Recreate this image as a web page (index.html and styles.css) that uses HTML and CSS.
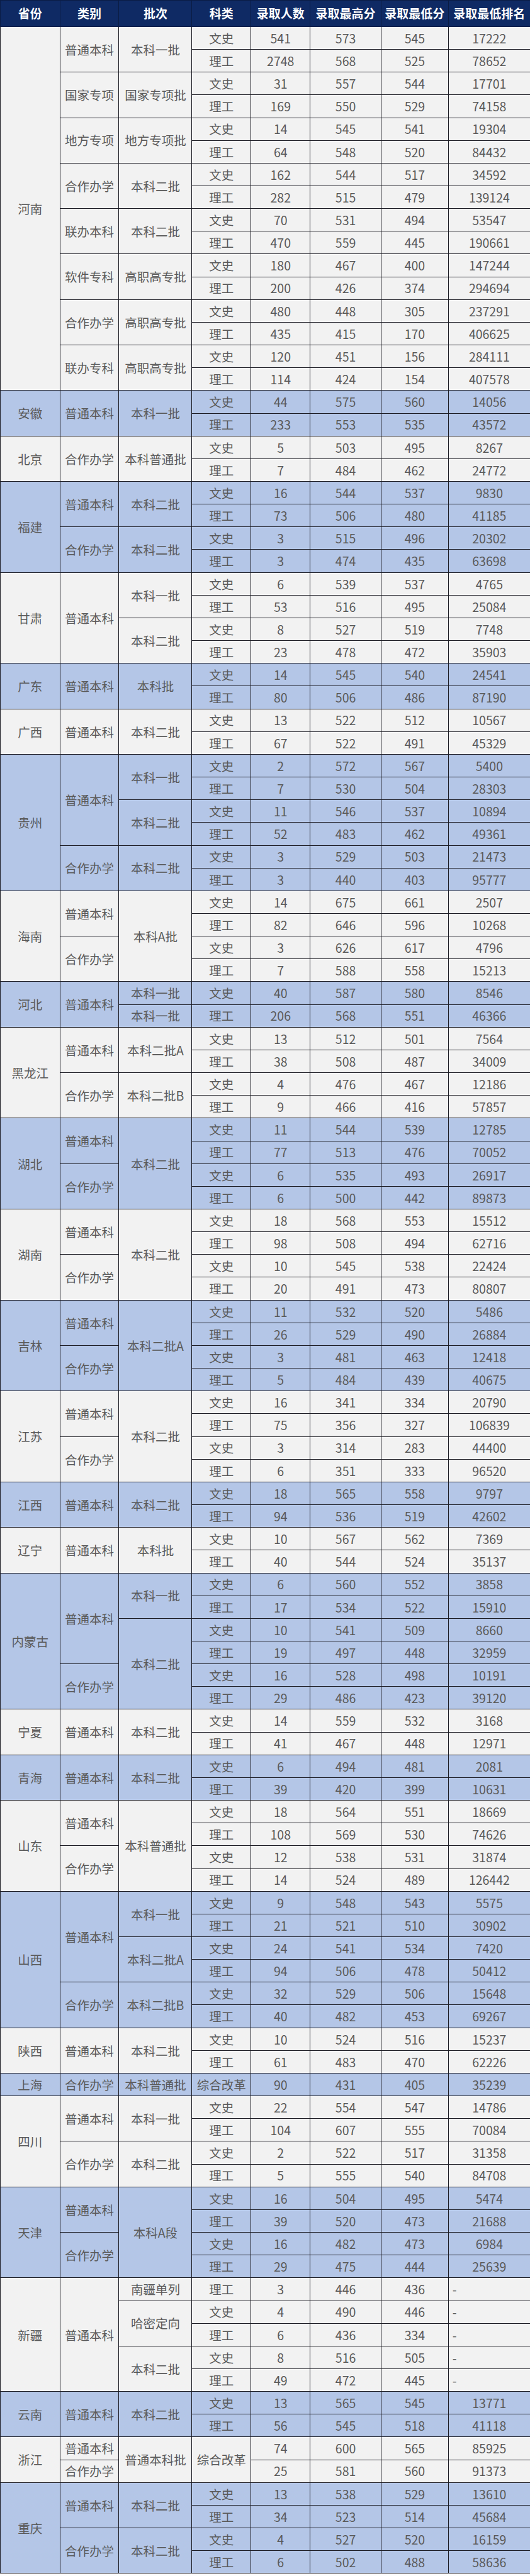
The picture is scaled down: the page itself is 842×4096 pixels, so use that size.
FILE: index.html
```html
<!DOCTYPE html>
<html lang="zh">
<head>
<meta charset="utf-8">
<title>录取分数</title>
<link rel="stylesheet" href="styles.css">
</head>
<body>
<table class="score-table">
<colgroup>
<col class="c-prov"><col class="c-type"><col class="c-batch"><col class="c-subj"><col class="c-num"><col class="c-max"><col class="c-min"><col class="c-rank">
</colgroup>
<thead>
<tr><th>省份</th><th>类别</th><th>批次</th><th>科类</th><th>录取人数</th><th>录取最高分</th><th>录取最低分</th><th>录取最低排名</th></tr>
</thead>
<tbody class="light">
<tr><td rowspan="16">河南</td><td rowspan="2">普通本科</td><td rowspan="2">本科一批</td><td>文史</td><td>541</td><td>573</td><td>545</td><td>17222</td></tr>
<tr><td>理工</td><td>2748</td><td>568</td><td>525</td><td>78652</td></tr>
<tr><td rowspan="2">国家专项</td><td rowspan="2">国家专项批</td><td>文史</td><td>31</td><td>557</td><td>544</td><td>17701</td></tr>
<tr><td>理工</td><td>169</td><td>550</td><td>529</td><td>74158</td></tr>
<tr><td rowspan="2">地方专项</td><td rowspan="2">地方专项批</td><td>文史</td><td>14</td><td>545</td><td>541</td><td>19304</td></tr>
<tr><td>理工</td><td>64</td><td>548</td><td>520</td><td>84432</td></tr>
<tr><td rowspan="2">合作办学</td><td rowspan="2">本科二批</td><td>文史</td><td>162</td><td>544</td><td>517</td><td>34592</td></tr>
<tr><td>理工</td><td>282</td><td>515</td><td>479</td><td>139124</td></tr>
<tr><td rowspan="2">联办本科</td><td rowspan="2">本科二批</td><td>文史</td><td>70</td><td>531</td><td>494</td><td>53547</td></tr>
<tr><td>理工</td><td>470</td><td>559</td><td>445</td><td>190661</td></tr>
<tr><td rowspan="2">软件专科</td><td rowspan="2">高职高专批</td><td>文史</td><td>180</td><td>467</td><td>400</td><td>147244</td></tr>
<tr><td>理工</td><td>200</td><td>426</td><td>374</td><td>294694</td></tr>
<tr><td rowspan="2">合作办学</td><td rowspan="2">高职高专批</td><td>文史</td><td>480</td><td>448</td><td>305</td><td>237291</td></tr>
<tr><td>理工</td><td>435</td><td>415</td><td>170</td><td>406625</td></tr>
<tr><td rowspan="2">联办专科</td><td rowspan="2">高职高专批</td><td>文史</td><td>120</td><td>451</td><td>156</td><td>284111</td></tr>
<tr><td>理工</td><td>114</td><td>424</td><td>154</td><td>407578</td></tr>
</tbody>
<tbody class="blue">
<tr><td rowspan="2">安徽</td><td rowspan="2">普通本科</td><td rowspan="2">本科一批</td><td>文史</td><td>44</td><td>575</td><td>560</td><td>14056</td></tr>
<tr><td>理工</td><td>233</td><td>553</td><td>535</td><td>43572</td></tr>
</tbody>
<tbody class="light">
<tr><td rowspan="2">北京</td><td rowspan="2">合作办学</td><td rowspan="2">本科普通批</td><td>文史</td><td>5</td><td>503</td><td>495</td><td>8267</td></tr>
<tr><td>理工</td><td>7</td><td>484</td><td>462</td><td>24772</td></tr>
</tbody>
<tbody class="blue">
<tr><td rowspan="4">福建</td><td rowspan="2">普通本科</td><td rowspan="2">本科二批</td><td>文史</td><td>16</td><td>544</td><td>537</td><td>9830</td></tr>
<tr><td>理工</td><td>73</td><td>506</td><td>480</td><td>41185</td></tr>
<tr><td rowspan="2">合作办学</td><td rowspan="2">本科二批</td><td>文史</td><td>3</td><td>515</td><td>496</td><td>20302</td></tr>
<tr><td>理工</td><td>3</td><td>474</td><td>435</td><td>63698</td></tr>
</tbody>
<tbody class="light">
<tr><td rowspan="4">甘肃</td><td rowspan="4">普通本科</td><td rowspan="2">本科一批</td><td>文史</td><td>6</td><td>539</td><td>537</td><td>4765</td></tr>
<tr><td>理工</td><td>53</td><td>516</td><td>495</td><td>25084</td></tr>
<tr><td rowspan="2">本科二批</td><td>文史</td><td>8</td><td>527</td><td>519</td><td>7748</td></tr>
<tr><td>理工</td><td>23</td><td>478</td><td>472</td><td>35903</td></tr>
</tbody>
<tbody class="blue">
<tr><td rowspan="2">广东</td><td rowspan="2">普通本科</td><td rowspan="2">本科批</td><td>文史</td><td>14</td><td>545</td><td>540</td><td>24541</td></tr>
<tr><td>理工</td><td>80</td><td>506</td><td>486</td><td>87190</td></tr>
</tbody>
<tbody class="light">
<tr><td rowspan="2">广西</td><td rowspan="2">普通本科</td><td rowspan="2">本科二批</td><td>文史</td><td>13</td><td>522</td><td>512</td><td>10567</td></tr>
<tr><td>理工</td><td>67</td><td>522</td><td>491</td><td>45329</td></tr>
</tbody>
<tbody class="blue">
<tr><td rowspan="6">贵州</td><td rowspan="4">普通本科</td><td rowspan="2">本科一批</td><td>文史</td><td>2</td><td>572</td><td>567</td><td>5400</td></tr>
<tr><td>理工</td><td>7</td><td>530</td><td>504</td><td>28303</td></tr>
<tr><td rowspan="2">本科二批</td><td>文史</td><td>11</td><td>546</td><td>537</td><td>10894</td></tr>
<tr><td>理工</td><td>52</td><td>483</td><td>462</td><td>49361</td></tr>
<tr><td rowspan="2">合作办学</td><td rowspan="2">本科二批</td><td>文史</td><td>3</td><td>529</td><td>503</td><td>21473</td></tr>
<tr><td>理工</td><td>3</td><td>440</td><td>403</td><td>95777</td></tr>
</tbody>
<tbody class="light">
<tr><td rowspan="4">海南</td><td rowspan="2">普通本科</td><td rowspan="4">本科A批</td><td>文史</td><td>14</td><td>675</td><td>661</td><td>2507</td></tr>
<tr><td>理工</td><td>82</td><td>646</td><td>596</td><td>10268</td></tr>
<tr><td rowspan="2">合作办学</td><td>文史</td><td>3</td><td>626</td><td>617</td><td>4796</td></tr>
<tr><td>理工</td><td>7</td><td>588</td><td>558</td><td>15213</td></tr>
</tbody>
<tbody class="blue">
<tr><td rowspan="2">河北</td><td rowspan="2">普通本科</td><td>本科一批</td><td>文史</td><td>40</td><td>587</td><td>580</td><td>8546</td></tr>
<tr><td>本科一批</td><td>理工</td><td>206</td><td>568</td><td>551</td><td>46366</td></tr>
</tbody>
<tbody class="light">
<tr><td rowspan="4">黑龙江</td><td rowspan="2">普通本科</td><td rowspan="2">本科二批A</td><td>文史</td><td>13</td><td>512</td><td>501</td><td>7564</td></tr>
<tr><td>理工</td><td>38</td><td>508</td><td>487</td><td>34009</td></tr>
<tr><td rowspan="2">合作办学</td><td rowspan="2">本科二批B</td><td>文史</td><td>4</td><td>476</td><td>467</td><td>12186</td></tr>
<tr><td>理工</td><td>9</td><td>466</td><td>416</td><td>57857</td></tr>
</tbody>
<tbody class="blue">
<tr><td rowspan="4">湖北</td><td rowspan="2">普通本科</td><td rowspan="4">本科二批</td><td>文史</td><td>11</td><td>544</td><td>539</td><td>12785</td></tr>
<tr><td>理工</td><td>77</td><td>513</td><td>476</td><td>70052</td></tr>
<tr><td rowspan="2">合作办学</td><td>文史</td><td>6</td><td>535</td><td>493</td><td>26917</td></tr>
<tr><td>理工</td><td>6</td><td>500</td><td>442</td><td>89873</td></tr>
</tbody>
<tbody class="light">
<tr><td rowspan="4">湖南</td><td rowspan="2">普通本科</td><td rowspan="4">本科二批</td><td>文史</td><td>18</td><td>568</td><td>553</td><td>15512</td></tr>
<tr><td>理工</td><td>98</td><td>508</td><td>494</td><td>62716</td></tr>
<tr><td rowspan="2">合作办学</td><td>文史</td><td>10</td><td>545</td><td>538</td><td>22424</td></tr>
<tr><td>理工</td><td>20</td><td>491</td><td>473</td><td>80807</td></tr>
</tbody>
<tbody class="blue">
<tr><td rowspan="4">吉林</td><td rowspan="2">普通本科</td><td rowspan="4">本科二批A</td><td>文史</td><td>11</td><td>532</td><td>520</td><td>5486</td></tr>
<tr><td>理工</td><td>26</td><td>529</td><td>490</td><td>26884</td></tr>
<tr><td rowspan="2">合作办学</td><td>文史</td><td>3</td><td>481</td><td>463</td><td>12418</td></tr>
<tr><td>理工</td><td>5</td><td>484</td><td>439</td><td>40675</td></tr>
</tbody>
<tbody class="light">
<tr><td rowspan="4">江苏</td><td rowspan="2">普通本科</td><td rowspan="4">本科二批</td><td>文史</td><td>16</td><td>341</td><td>334</td><td>20790</td></tr>
<tr><td>理工</td><td>75</td><td>356</td><td>327</td><td>106839</td></tr>
<tr><td rowspan="2">合作办学</td><td>文史</td><td>3</td><td>314</td><td>283</td><td>44400</td></tr>
<tr><td>理工</td><td>6</td><td>351</td><td>333</td><td>96520</td></tr>
</tbody>
<tbody class="blue">
<tr><td rowspan="2">江西</td><td rowspan="2">普通本科</td><td rowspan="2">本科二批</td><td>文史</td><td>18</td><td>565</td><td>558</td><td>9797</td></tr>
<tr><td>理工</td><td>94</td><td>536</td><td>519</td><td>42602</td></tr>
</tbody>
<tbody class="light">
<tr><td rowspan="2">辽宁</td><td rowspan="2">普通本科</td><td rowspan="2">本科批</td><td>文史</td><td>10</td><td>567</td><td>562</td><td>7369</td></tr>
<tr><td>理工</td><td>40</td><td>544</td><td>524</td><td>35137</td></tr>
</tbody>
<tbody class="blue">
<tr><td rowspan="6">内蒙古</td><td rowspan="4">普通本科</td><td rowspan="2">本科一批</td><td>文史</td><td>6</td><td>560</td><td>552</td><td>3858</td></tr>
<tr><td>理工</td><td>17</td><td>534</td><td>522</td><td>15910</td></tr>
<tr><td rowspan="4">本科二批</td><td>文史</td><td>10</td><td>541</td><td>509</td><td>8660</td></tr>
<tr><td>理工</td><td>19</td><td>497</td><td>448</td><td>32959</td></tr>
<tr><td rowspan="2">合作办学</td><td>文史</td><td>16</td><td>528</td><td>498</td><td>10191</td></tr>
<tr><td>理工</td><td>29</td><td>486</td><td>423</td><td>39120</td></tr>
</tbody>
<tbody class="light">
<tr><td rowspan="2">宁夏</td><td rowspan="2">普通本科</td><td rowspan="2">本科二批</td><td>文史</td><td>14</td><td>559</td><td>532</td><td>3168</td></tr>
<tr><td>理工</td><td>41</td><td>467</td><td>448</td><td>12971</td></tr>
</tbody>
<tbody class="blue">
<tr><td rowspan="2">青海</td><td rowspan="2">普通本科</td><td rowspan="2">本科二批</td><td>文史</td><td>6</td><td>494</td><td>481</td><td>2081</td></tr>
<tr><td>理工</td><td>39</td><td>420</td><td>399</td><td>10631</td></tr>
</tbody>
<tbody class="light">
<tr><td rowspan="4">山东</td><td rowspan="2">普通本科</td><td rowspan="4">本科普通批</td><td>文史</td><td>18</td><td>564</td><td>551</td><td>18669</td></tr>
<tr><td>理工</td><td>108</td><td>569</td><td>530</td><td>74626</td></tr>
<tr><td rowspan="2">合作办学</td><td>文史</td><td>12</td><td>538</td><td>531</td><td>31874</td></tr>
<tr><td>理工</td><td>14</td><td>524</td><td>489</td><td>126442</td></tr>
</tbody>
<tbody class="blue">
<tr><td rowspan="6">山西</td><td rowspan="4">普通本科</td><td rowspan="2">本科一批</td><td>文史</td><td>9</td><td>548</td><td>543</td><td>5575</td></tr>
<tr><td>理工</td><td>21</td><td>521</td><td>510</td><td>30902</td></tr>
<tr><td rowspan="2">本科二批A</td><td>文史</td><td>24</td><td>541</td><td>534</td><td>7420</td></tr>
<tr><td>理工</td><td>94</td><td>506</td><td>478</td><td>50412</td></tr>
<tr><td rowspan="2">合作办学</td><td rowspan="2">本科二批B</td><td>文史</td><td>32</td><td>529</td><td>506</td><td>15648</td></tr>
<tr><td>理工</td><td>40</td><td>482</td><td>453</td><td>69267</td></tr>
</tbody>
<tbody class="light">
<tr><td rowspan="2">陕西</td><td rowspan="2">普通本科</td><td rowspan="2">本科二批</td><td>文史</td><td>10</td><td>524</td><td>516</td><td>15237</td></tr>
<tr><td>理工</td><td>61</td><td>483</td><td>470</td><td>62226</td></tr>
</tbody>
<tbody class="blue">
<tr><td>上海</td><td>合作办学</td><td>本科普通批</td><td>综合改革</td><td>90</td><td>431</td><td>405</td><td>35239</td></tr>
</tbody>
<tbody class="light">
<tr><td rowspan="4">四川</td><td rowspan="2">普通本科</td><td rowspan="2">本科一批</td><td>文史</td><td>22</td><td>554</td><td>547</td><td>14786</td></tr>
<tr><td>理工</td><td>104</td><td>607</td><td>555</td><td>70084</td></tr>
<tr><td rowspan="2">合作办学</td><td rowspan="2">本科二批</td><td>文史</td><td>2</td><td>522</td><td>517</td><td>31358</td></tr>
<tr><td>理工</td><td>5</td><td>555</td><td>540</td><td>84708</td></tr>
</tbody>
<tbody class="blue">
<tr><td rowspan="4">天津</td><td rowspan="2">普通本科</td><td rowspan="4">本科A段</td><td>文史</td><td>16</td><td>504</td><td>495</td><td>5474</td></tr>
<tr><td>理工</td><td>39</td><td>520</td><td>473</td><td>21688</td></tr>
<tr><td rowspan="2">合作办学</td><td>文史</td><td>16</td><td>482</td><td>473</td><td>6984</td></tr>
<tr><td>理工</td><td>29</td><td>475</td><td>444</td><td>25639</td></tr>
</tbody>
<tbody class="light">
<tr><td rowspan="5">新疆</td><td rowspan="5">普通本科</td><td>南疆单列</td><td>理工</td><td>3</td><td>446</td><td>436</td><td class="dash">-</td></tr>
<tr><td rowspan="2">哈密定向</td><td>文史</td><td>4</td><td>490</td><td>446</td><td class="dash">-</td></tr>
<tr><td>理工</td><td>6</td><td>436</td><td>334</td><td class="dash">-</td></tr>
<tr><td rowspan="2">本科二批</td><td>文史</td><td>8</td><td>516</td><td>505</td><td class="dash">-</td></tr>
<tr><td>理工</td><td>49</td><td>472</td><td>445</td><td class="dash">-</td></tr>
</tbody>
<tbody class="blue">
<tr><td rowspan="2">云南</td><td rowspan="2">普通本科</td><td rowspan="2">本科二批</td><td>文史</td><td>13</td><td>565</td><td>545</td><td>13771</td></tr>
<tr><td>理工</td><td>56</td><td>545</td><td>518</td><td>41118</td></tr>
</tbody>
<tbody class="light">
<tr><td rowspan="2">浙江</td><td>普通本科</td><td rowspan="2">普通本科批</td><td rowspan="2">综合改革</td><td>74</td><td>600</td><td>565</td><td>85925</td></tr>
<tr><td>合作办学</td><td>25</td><td>581</td><td>560</td><td>91373</td></tr>
</tbody>
<tbody class="blue">
<tr><td rowspan="4">重庆</td><td rowspan="2">普通本科</td><td rowspan="2">本科二批</td><td>文史</td><td>13</td><td>538</td><td>529</td><td>13610</td></tr>
<tr><td>理工</td><td>34</td><td>523</td><td>514</td><td>45684</td></tr>
<tr><td rowspan="2">合作办学</td><td rowspan="2">本科二批</td><td>文史</td><td>4</td><td>527</td><td>520</td><td>16159</td></tr>
<tr><td>理工</td><td>6</td><td>502</td><td>488</td><td>58636</td></tr>
</tbody>
</table>
</body>
</html>
```

FILE: styles.css
```css
html, body {
  margin: 0;
  padding: 0;
  background: #ffffff;
}

.score-table {
  width: 842px;
  table-layout: fixed;
  border-collapse: collapse;
  font-family: "Noto Sans CJK SC", "Noto Sans", sans-serif;
  font-size: 19.5px;
  color: #5a5a5a;
}

.c-prov { width: 94.5px; }
.c-type { width: 93.9px; }
.c-batch { width: 116px; }
.c-subj { width: 93.9px; }
.c-num { width: 93.9px; }
.c-max { width: 112.8px; }
.c-min { width: 106.8px; }
.c-rank { width: 130.2px; }

.score-table th,
.score-table td {
  border: 1px solid #1c1c24;
  padding: 0;
  text-align: center;
  vertical-align: middle;
  white-space: nowrap;
  line-height: 1.2;
}

.score-table thead tr {
  height: 41.9px;
}

.score-table th {
  background: #0f2a64;
  color: #ffffff;
  font-weight: 700;
  font-size: 19px;
  border-color: #0a1c44;
}

.score-table tbody tr {
  height: 36.16px;
}

.light td {
  background: #f2f2f2;
}

.blue td {
  background: #b4c6e7;
}

.score-table td.dash {
  text-align: left;
  padding-left: 6px;
}
```
